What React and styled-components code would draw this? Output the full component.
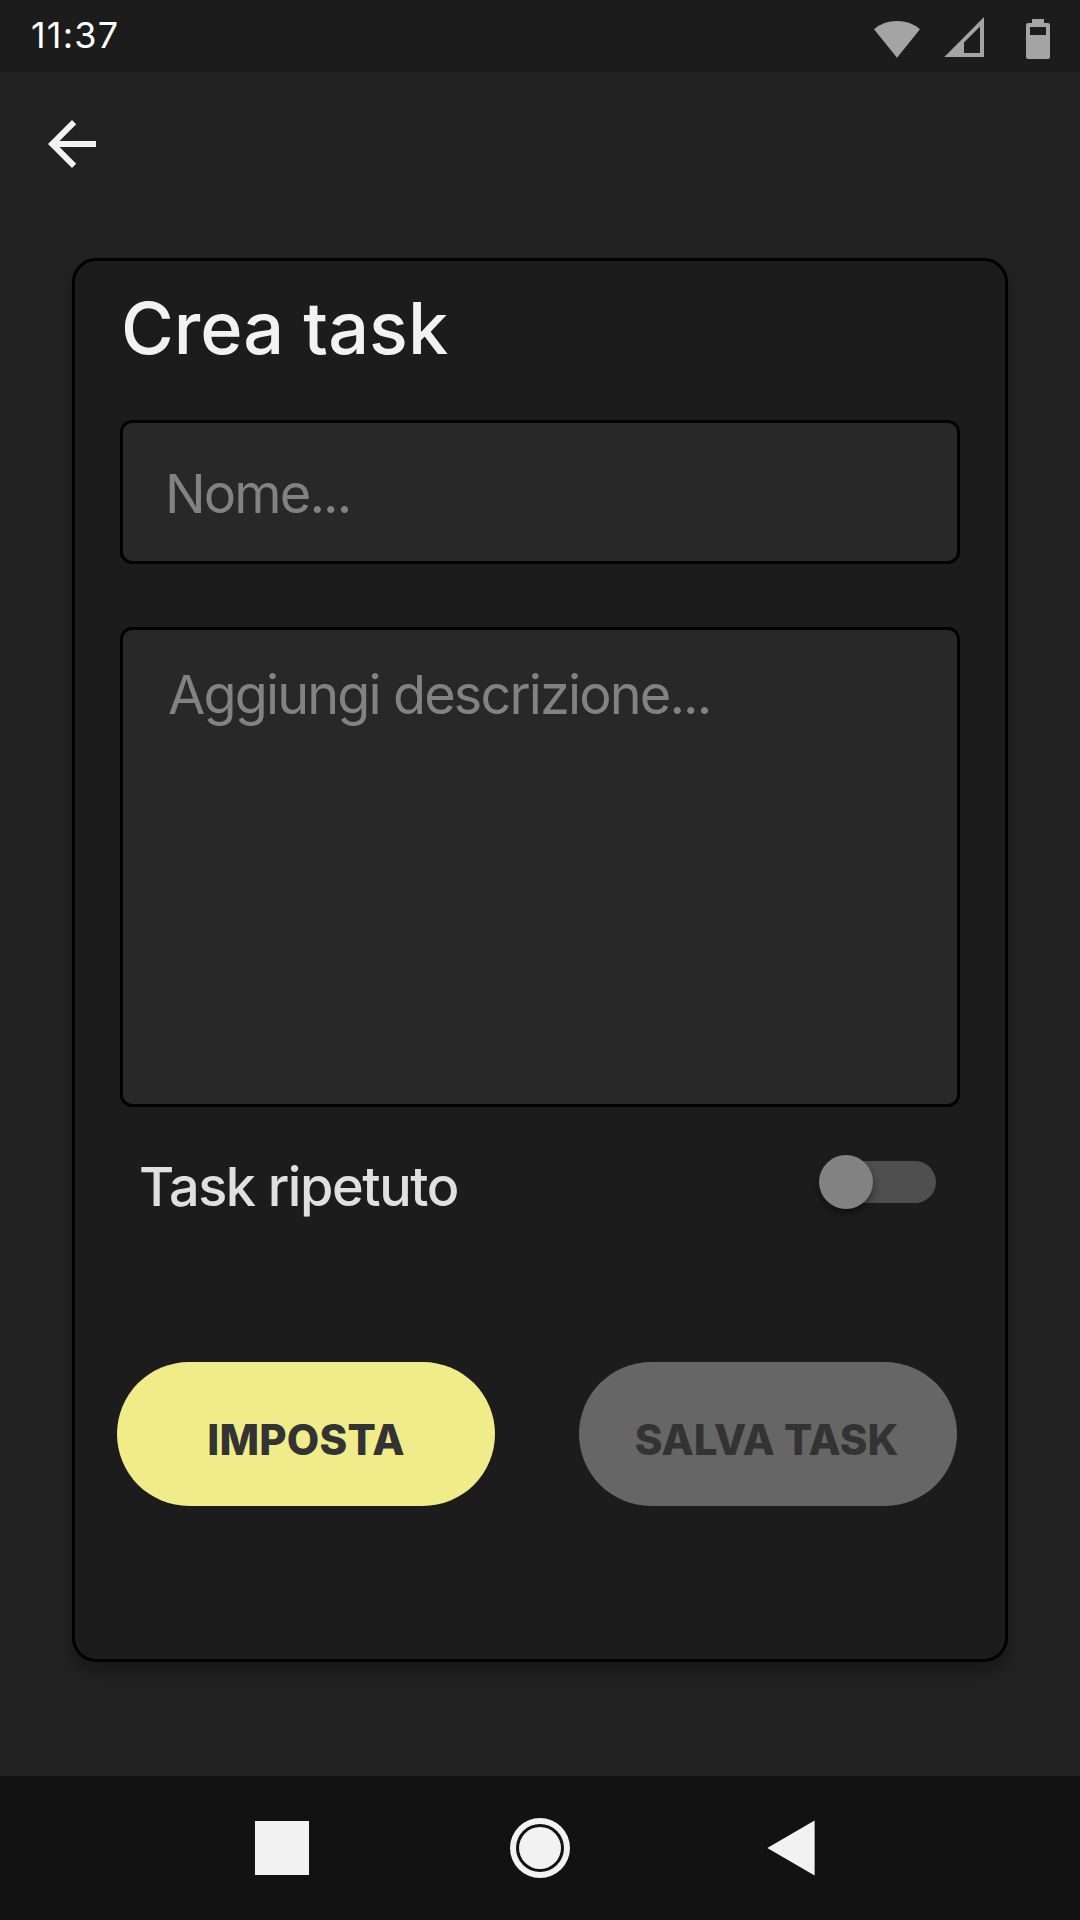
import React from "react";
import styled, { createGlobalStyle } from "styled-components";

const GlobalStyle = createGlobalStyle`
  * { box-sizing: border-box; }
  body { margin: 0; background: #222222; }
`;

const Screen = styled.div`
  display: flex;
  flex-direction: column;
  width: 1080px;
  height: 1920px;
  overflow: hidden;
  background: #222222;
  font-family: Inter, "Liberation Sans", sans-serif;
`;

const StatusBar = styled.header`
  display: flex;
  justify-content: space-between;
  flex: none;
  height: 72px;
  padding: 13px 30px 0 31px;
  background: #1c1c1c;
`;

const Clock = styled.time`
  font-size: 36px;
  font-weight: 400;
  line-height: 44px;
  letter-spacing: 1.2px;
  color: #ffffff;
`;

const StatusIcons = styled.div`
  display: flex;
  align-items: flex-start;
  padding-top: 4px;
  color: #a4a4a4;
`;

const StatusIcon = styled.svg`
  display: block;
  width: ${(p) => p.$width}px;
  height: 42px;
  margin-left: ${(p) => p.$gap || 0}px;
  fill: currentColor;
`;

const Toolbar = styled.nav`
  flex: none;
  height: 186px;
  padding: 36px;
`;

const BackButton = styled.button`
  display: block;
  width: 72px;
  height: 72px;
  padding: 0;
  border: 0;
  background: none;
  svg {
    display: block;
    fill: #f2f2f2;
  }
`;

const Main = styled.main`
  flex: 1;
  padding: 0 72px;
`;

const Card = styled.section`
  height: 1404px;
  padding: 23px 45px 0;
  border: 3px solid #000000;
  border-radius: 24px;
  background: #1c1c1c;
  box-shadow: 0 12px 12px rgba(0, 0, 0, 0.25);
`;

const Title = styled.h1`
  margin: 0 0 49px;
  padding-left: 1px;
  height: 87px;
  font-size: 72px;
  font-weight: 500;
  line-height: 87px;
  color: #f2f2f2;
`;

const Field = styled.div`
  height: ${(p) => p.$height}px;
  margin-bottom: ${(p) => p.$after}px;
  padding: ${(p) => p.$pad};
  border: 3px solid #000000;
  border-radius: 12px;
  background: #282828;
  font-size: 54px;
  line-height: 66px;
  letter-spacing: -1.86px;
  color: #828282;
`;

const ToggleRow = styled.div`
  display: flex;
  justify-content: space-between;
  height: 66px;
  margin-bottom: 142px;
  padding: 0 24px 0 19px;
`;

const ToggleLabel = styled.span`
  font-size: 54px;
  font-weight: 500;
  line-height: 66px;
  letter-spacing: -1.4px;
  color: #e0e0e0;
`;

const Track = styled.div`
  display: flex;
  align-items: center;
  width: 114px;
  height: 42px;
  margin-top: 7px;
  border-radius: 21px;
  background: #4f4f4f;
`;

const Thumb = styled.div`
  flex: none;
  width: 54px;
  height: 54px;
  margin-left: -3px;
  border-radius: 50%;
  background: #828282;
  box-shadow: 0 5px 8px rgba(0, 0, 0, 0.42);
`;

const Actions = styled.div`
  display: flex;
  justify-content: space-between;
  margin: 0 0 0 -3px;
  padding-right: 3px;
`;

const ActionButton = styled.button`
  width: 378px;
  height: 144px;
  padding: 10px ${(p) => p.$inset}px 0 0;
  border: 0;
  border-radius: 72px;
  background: ${(p) => p.$fill};
  font-family: inherit;
  font-size: 42px;
  font-weight: 800;
  line-height: 51px;
  letter-spacing: ${(p) => p.$tracking}px;
  color: #333333;
`;

const SystemNav = styled.footer`
  display: flex;
  align-items: center;
  flex: none;
  height: 144px;
  background: #121212;
`;

const NavIcon = styled.svg`
  display: block;
  margin-left: ${(p) => p.$gap}px;
  fill: #f2f2f2;
`;

export default function App() {
  return (
    <Screen>
      <GlobalStyle />
      <StatusBar>
        <Clock>11:37</Clock>
        <StatusIcons>
          <StatusIcon $width={46} viewBox="0 0 46 42">
            <path d="M0 12.2Q9.5 4 23 4T46 12.2L23 40.8Z" />
          </StatusIcon>
          <StatusIcon $width={40} $gap={24} viewBox="0 0 40 42">
            <path fillRule="evenodd" d="M0.3 40L40 0V40ZM20 25.4V36H36V9.6Z" />
          </StatusIcon>
          <StatusIcon $width={24} $gap={42} viewBox="0 0 24 42">
            <path
              fillRule="evenodd"
              d="M6 2H18V6H22Q24 6 24 8V40Q24 42 22 42H2Q0 42 0 40V8Q0 6 2 6H6ZM4 10V18H20V10Z"
            />
          </StatusIcon>
        </StatusIcons>
      </StatusBar>
      <Toolbar>
        <BackButton aria-label="Indietro">
          <svg width="72" height="72" viewBox="0 0 24 24">
            <path d="M20 11H7.83l5.59-5.59L12 4l-8 8 8 8 1.41-1.41L7.83 13H20v-2z" />
          </svg>
        </BackButton>
      </Toolbar>
      <Main>
        <Card>
          <Title>Crea task</Title>
          <Field $height={144} $after={63} $pad="38px 42px">Nome...</Field>
          <Field $height={480} $after={47} $pad="32px 45px">Aggiungi descrizione...</Field>
          <ToggleRow>
            <ToggleLabel>Task ripetuto</ToggleLabel>
            <Track>
              <Thumb />
            </Track>
          </ToggleRow>
          <Actions>
            <ActionButton $fill="#f0ec8a" $tracking={0.2} $inset={0}>IMPOSTA</ActionButton>
            <ActionButton $fill="#666666" $tracking={-0.1} $inset={3}>SALVA TASK</ActionButton>
          </Actions>
        </Card>
      </Main>
      <SystemNav>
        <NavIcon $gap={255} width="54" height="54" viewBox="0 0 54 54">
          <path d="M0 0H54V54H0Z" />
        </NavIcon>
        <NavIcon $gap={201} width="60" height="60" viewBox="0 0 60 60">
          <path
            fillRule="evenodd"
            d="M30 0A30 30 0 0 1 30 60A30 30 0 0 1 30 0ZM30 6A24 24 0 0 0 30 54A24 24 0 0 0 30 6Z"
          />
          <circle cx="30" cy="30" r="21" />
        </NavIcon>
        <NavIcon $gap={197} width="48" height="56" viewBox="0 0 48 56">
          <path d="M0.3 28L47.6 0.5V55.5Z" />
        </NavIcon>
      </SystemNav>
    </Screen>
  );
}
